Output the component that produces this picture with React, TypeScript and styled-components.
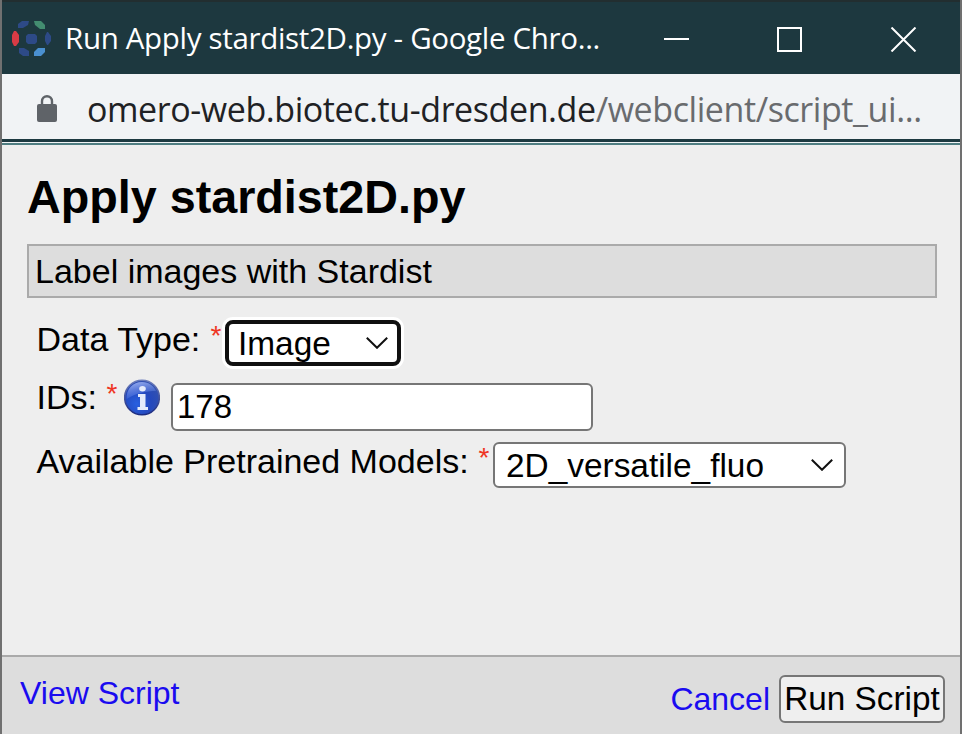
import React from "react";
import styled, { createGlobalStyle } from "styled-components";

const GlobalStyle = createGlobalStyle`
  * { box-sizing: border-box; }
  body { margin: 0; background: #eee; }
`;

const Window = styled.div`
  width: 962px;
  height: 734px;
  display: flex;
  flex-direction: column;
  overflow: hidden;
  background: #eee;
  color: #000;
  border: solid #707070;
  border-width: 0 2px;
  font-family: "Liberation Sans", Arial, sans-serif;
  font-size: 34px;
  white-space: nowrap;
`;

const TitleBar = styled.header`
  height: 74px;
  flex: none;
  display: flex;
  align-items: center;
  padding-left: 9px;
  background: #1d383f;
  border-top: 2px solid #222e30;
  color: #fff;
  font-family: "Open Sans", "Noto Sans", sans-serif;
`;

const WindowTitle = styled.div`
  width: 564px;
  margin-left: 13px;
  font-size: 29.5px;
  line-height: 40px;
  letter-spacing: -0.32px;
`;

const WindowControls = styled.div`
  display: flex;
  gap: 88px;
  margin: 3px 0 0 35px;
  svg { display: block; }
`;

const AddressBar = styled.div`
  height: 71px;
  flex: none;
  display: flex;
  padding: 12px 0 0 35px;
  background: #f1f3f5;
  border-bottom: 2px solid #4f7d81;
  box-shadow: inset 0 -1px #f1f3f5, inset 0 -4px #1d3940;
  color: #202124;
  font-family: "Open Sans", "Noto Sans", sans-serif;
`;

const Url = styled.div`
  margin-left: 30px;
  font-size: 34px;
  line-height: 46px;
  letter-spacing: -0.42px;
`;

const UrlPath = styled.span`
  color: #696b6e;
`;

const Content = styled.main`
  flex: 1;
  padding: 25px 23px 0 25px;
`;

const Heading = styled.h1`
  margin: 0;
  font-size: 46.7px;
  line-height: 54px;
  font-weight: 700;
`;

const Description = styled.div`
  height: 54px;
  margin-top: 20px;
  padding-left: 6px;
  border: 2px solid #aaa;
  background: #ddd;
  line-height: 51px;
`;

const Fields = styled.form`
  margin-top: 21px;
`;

const Field = styled.div<{ $height: number }>`
  display: flex;
  align-items: flex-start;
  height: ${(p) => p.$height}px;
  padding-left: 9.5px;
`;

const Label = styled.label<{ $width: number }>`
  width: ${(p) => p.$width}px;
  line-height: 40px;
`;

const Required = styled.span`
  width: 14.5px;
  color: #ee3524;
  font-size: 28px;
  line-height: 34px;
`;

const ControlSlot = styled.div<{ $top: number }>`
  margin-top: ${(p) => p.$top}px;
`;

const Select = styled.div<{ $width: number; $focused?: boolean }>`
  width: ${(p) => p.$width}px;
  height: 46px;
  display: flex;
  align-items: center;
  justify-content: space-between;
  padding: 0 ${(p) => (p.$focused ? "9px 0 9px" : "11px 0 11px")};
  border: ${(p) => (p.$focused ? "4px solid #101010" : "2px solid #767676")};
  border-radius: ${(p) => (p.$focused ? 8 : 6)}px;
  box-shadow: ${(p) => (p.$focused ? "0 0 0 3px #fff" : "none")};
  background: #fff;
  font-size: 33.4px;
  line-height: 38px;
`;

const SelectValue = styled.span`
  padding-top: 2px;
`;

const TextInput = styled.input`
  width: 422px;
  height: 48px;
  margin: 0;
  padding: 0 4px;
  border: 2px solid #767676;
  border-radius: 6px;
  outline: none;
  background: #fff;
  color: #000;
  font: 33px "Liberation Sans", Arial, sans-serif;
`;

const Footer = styled.footer`
  height: 79px;
  flex: none;
  display: flex;
  align-items: flex-start;
  padding: 18px 15px 0 18px;
  border-top: 2px solid #aaa;
  background: #ddd;
`;

const Link = styled.a<{ $push?: boolean }>`
  margin-left: ${(p) => (p.$push ? "auto" : "0")};
  margin-top: ${(p) => (p.$push ? 6 : 0)}px;
  color: #1a0bf0;
  font-size: 32px;
  line-height: 36px;
`;

const RunButton = styled.button`
  width: 166px;
  height: 48px;
  margin-left: 9px;
  padding: 0;
  border: 2px solid #767676;
  border-radius: 6px;
  background: #efefef;
  color: #000;
  font: 33.3px "Liberation Sans", Arial, sans-serif;
`;

const LockSlot = styled.span`
  width: 20px;
  padding-top: 9px;
  svg { display: block; }
`;

const InfoSlot = styled.span`
  width: 36px;
  margin: 2px 11px 0 3px;
  svg { display: block; }
`;

const Chevron = () => (
  <svg width="22" height="12" viewBox="0 0 22 12" fill="none" stroke="#101010" strokeWidth="2">
    <path d="M.8.8 11 10.8 21.2.8" />
  </svg>
);

const AppLogo = () => (
  <svg width="41" height="36" viewBox="0 0 41 36">
    <path d="M11 1h7l-1 4-5 3H7V4z" fill="#2d4a87" />
    <path d="M23 1h7l4 4v4h-5l-5-4z" fill="#438c70" />
    <path d="M3 11h2l3 4v7l-3 4H3l-2-4v-7z" fill="#d83b45" />
    <path d="M17 14h7l2 2v6l-2 2h-7l-2-2v-6z" fill="#2d4a87" />
    <path d="M36 12h1l3 4v5l-3 4h-1l-2-4v-5z" fill="#2d4a87" />
    <path d="M8 28h5l5 3v5h-6l-4-3z" fill="#2d4a87" />
    <path d="M27 28h7v4l-4 4h-7v-4z" fill="#4a90d0" />
  </svg>
);

const Lock = () => (
  <svg width="20" height="27" viewBox="0 0 20 27">
    <path d="M5 11V6.2a5 5 0 0 1 10 0V11" fill="none" stroke="#5f6368" strokeWidth="2.4" />
    <rect y="9" width="20" height="18" rx="2" fill="#5f6368" />
  </svg>
);

const InfoIcon = () => (
  <svg width="36" height="37" viewBox="0 0 36 37">
    <defs>
      <linearGradient id="infoRim" x1="0" y1="0" x2="0" y2="1">
        <stop offset="0" stopColor="#6d7ebc" />
        <stop offset="1" stopColor="#1a2a80" />
      </linearGradient>
      <radialGradient id="infoFill" cx=".35" cy=".68" r=".75">
        <stop offset="0" stopColor="#2860e0" />
        <stop offset=".55" stopColor="#2448bd" />
        <stop offset="1" stopColor="#3352ae" />
      </radialGradient>
      <linearGradient id="infoGloss" x1="0" y1="0" x2=".4" y2="1">
        <stop offset="0" stopColor="#b9caff" stopOpacity=".85" />
        <stop offset="1" stopColor="#7ca0ff" stopOpacity=".1" />
      </linearGradient>
    </defs>
    <circle cx="18" cy="18.5" r="17.3" fill="url(#infoFill)" stroke="url(#infoRim)" strokeWidth="1.6" />
    <path d="M2.7 20C2 10 9 3 18 3c7 0 12 4 14 9-10 0-20 2-29.3 8z" fill="url(#infoGloss)" />
    <ellipse cx="18.5" cy="9.8" rx="3.3" ry="2.7" fill="#e4ebfb" />
    <path d="M14 15h7.5v13H24v3H13.5v-3H16V18h-2z" fill="#e4ebfb" />
  </svg>
);

export default function App() {
  return (
    <>
      <GlobalStyle />
      <Window>
        <TitleBar>
          <AppLogo />
          <WindowTitle>Run Apply stardist2D.py - Google Chro...</WindowTitle>
          <WindowControls>
            <svg width="25" height="25" viewBox="0 0 25 25"><path d="M0 12h25" stroke="#fff" strokeWidth="2" /></svg>
            <svg width="25" height="25" viewBox="0 0 25 25"><rect x="1" y="1" width="23" height="23" fill="none" stroke="#fff" strokeWidth="2" /></svg>
            <svg width="27" height="25" viewBox="0 0 27 25"><path d="m1.5.5 24 24m0-24-24 24" stroke="#fff" strokeWidth="2" /></svg>
          </WindowControls>
        </TitleBar>
        <AddressBar>
          <LockSlot><Lock /></LockSlot>
          <Url>omero-web.biotec.tu-dresden.de<UrlPath>/webclient/script_ui...</UrlPath></Url>
        </AddressBar>
        <Content>
          <Heading>Apply stardist2D.py</Heading>
          <Description>Label images with Stardist</Description>
          <Fields>
            <Field $height={58}>
              <Label $width={174}>Data Type:</Label>
              <Required>*</Required>
              <ControlSlot $top={1}>
                <Select $width={176} $focused>
                  <SelectValue>Image</SelectValue>
                  <Chevron />
                </Select>
              </ControlSlot>
            </Field>
            <Field $height={64}>
              <Label $width={70}>IDs:</Label>
              <Required>*</Required>
              <InfoSlot><InfoIcon /></InfoSlot>
              <ControlSlot $top={6}>
                <TextInput defaultValue="178" />
              </ControlSlot>
            </Field>
            <Field $height={60}>
              <Label $width={442}>Available Pretrained Models:</Label>
              <Required>*</Required>
              <ControlSlot $top={1}>
                <Select $width={353}>
                  <SelectValue>2D_versatile_fluo</SelectValue>
                  <Chevron />
                </Select>
              </ControlSlot>
            </Field>
          </Fields>
        </Content>
        <Footer>
          <Link>View Script</Link>
          <Link $push>Cancel</Link>
          <RunButton>Run Script</RunButton>
        </Footer>
      </Window>
    </>
  );
}
